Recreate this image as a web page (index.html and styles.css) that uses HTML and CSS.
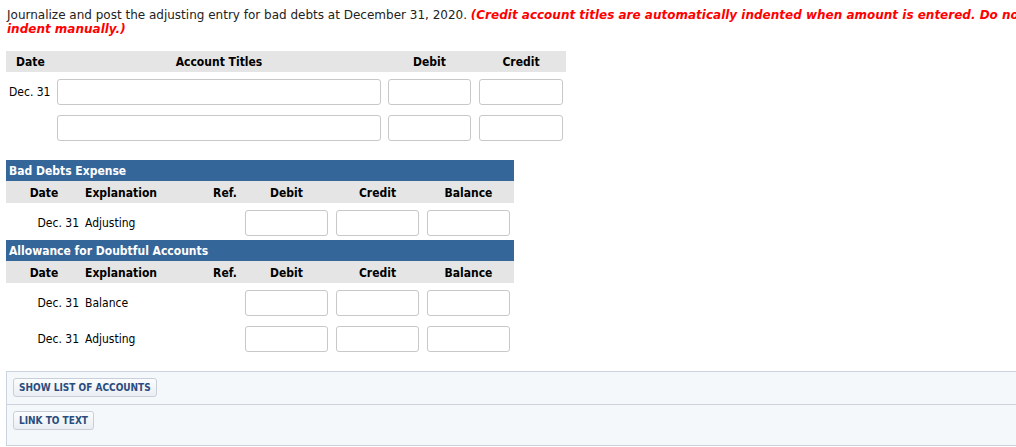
FILE: index.html
```html
<!DOCTYPE html>
<html>
<head>
<meta charset="utf-8">
<link rel="stylesheet" href="styles.css">
</head>
<body>
<div class="page">
  <p class="intro">Journalize and post the adjusting entry for bad debts at December 31, 2020. <em class="note">(Credit account titles are automatically indented when amount is entered. Do not<br>indent manually.)</em></p>

  <div class="journal">
    <div class="jrow jhead">
      <div class="jdate">Date</div>
      <div class="jacct">Account Titles</div>
      <div class="jdebit">Debit</div>
      <div class="jcredit">Credit</div>
    </div>
    <div class="jrow jentry">
      <div class="jdate-val">Dec. 31</div>
      <div class="jacct"><input class="fld fld-acct" type="text"></div>
      <div class="jdebit"><input class="fld fld-num" type="text"></div>
      <div class="jcredit"><input class="fld fld-num2" type="text"></div>
    </div>
    <div class="jrow jentry">
      <div class="jdate-val"></div>
      <div class="jacct"><input class="fld fld-acct" type="text"></div>
      <div class="jdebit"><input class="fld fld-num" type="text"></div>
      <div class="jcredit"><input class="fld fld-num2" type="text"></div>
    </div>
  </div>

  <div class="ledger first">
    <div class="ltitle">Bad Debts Expense</div>
    <div class="lrow lhead">
      <div class="ldate">Date</div>
      <div class="lexp">Explanation</div>
      <div class="lref">Ref.</div>
      <div class="lamt">Debit</div>
      <div class="lamt">Credit</div>
      <div class="lamt">Balance</div>
    </div>
    <div class="lrow lentry">
      <div class="ldate-val">Dec. 31</div>
      <div class="lexp">Adjusting</div>
      <div class="lref"></div>
      <div class="lamt"><input class="fld fld-l" type="text"></div>
      <div class="lamt"><input class="fld fld-l" type="text"></div>
      <div class="lamt"><input class="fld fld-l" type="text"></div>
    </div>
  </div>

  <div class="ledger second">
    <div class="ltitle">Allowance for Doubtful Accounts</div>
    <div class="lrow lhead">
      <div class="ldate">Date</div>
      <div class="lexp">Explanation</div>
      <div class="lref">Ref.</div>
      <div class="lamt">Debit</div>
      <div class="lamt">Credit</div>
      <div class="lamt">Balance</div>
    </div>
    <div class="lrow lentry">
      <div class="ldate-val">Dec. 31</div>
      <div class="lexp">Balance</div>
      <div class="lref"></div>
      <div class="lamt"><input class="fld fld-l" type="text"></div>
      <div class="lamt"><input class="fld fld-l" type="text"></div>
      <div class="lamt"><input class="fld fld-l" type="text"></div>
    </div>
    <div class="lrow lentry">
      <div class="ldate-val">Dec. 31</div>
      <div class="lexp">Adjusting</div>
      <div class="lref"></div>
      <div class="lamt"><input class="fld fld-l" type="text"></div>
      <div class="lamt"><input class="fld fld-l" type="text"></div>
      <div class="lamt"><input class="fld fld-l" type="text"></div>
    </div>
  </div>

  <div class="panel">
    <div class="panel-sec sec1"><button class="btn" type="button">SHOW LIST OF ACCOUNTS</button></div>
    <div class="panel-sec sec2"><button class="btn" type="button">LINK TO TEXT</button></div>
  </div>
</div>
</body>
</html>
```
FILE: styles.css
```css
html, body {
  margin: 0;
  padding: 0;
  background: #fff;
  overflow: hidden;
}
body {
  font-family: "DejaVu Sans Condensed", "DejaVu Sans", sans-serif;
  font-size: 12px;
  color: #000;
}
.page {
  width: 1040px;
  padding: 8px 0 0 6px;
}
.intro {
  margin: 0 0 0 1px;
  font-family: "DejaVu Sans", Verdana, sans-serif;
  font-size: 12px;
  line-height: 14px;
  color: #222;
  white-space: nowrap;
}
.note {
  color: #f00;
  font-weight: bold;
  font-style: italic;
}

/* Journal */
.journal {
  width: 560px;
  margin-top: 15px;
}
.jrow {
  display: grid;
  grid-template-columns: 51px 324px 90px 92px;
}
.jhead {
  background: #e5e5e5;
  box-sizing: border-box;
  height: 21px;
  padding-top: 1px;
  line-height: 21px;
  font-weight: bold;
}
.jhead .jdate { padding-left: 10px; }
.jhead .jacct,
.jhead .jdebit,
.jhead .jcredit { text-align: center; }
.jdebit { padding-left: 7px; width: 83px; }
.jcredit { padding-left: 8px; width: 84px; }
.jentry {
  padding: 7px 0 3px;
  align-items: center;
}
.jdate-val { padding-left: 3px; }

.fld {
  display: block;
  box-sizing: border-box;
  height: 26px;
  margin: 0;
  padding: 0 4px;
  border: 1px solid #c8c8c8;
  border-radius: 3px;
  background: #fff;
  font: inherit;
  outline: none;
}
.fld-acct { width: 324px; }
.fld-num { width: 83px; }
.fld-num2 { width: 84px; }
.fld-l { width: 83px; }

/* Ledgers */
.ledger {
  width: 508px;
}
.ledger.first { margin-top: 16px; }
.ledger.second { margin-top: 1px; }
.ltitle {
  background: #346699;
  color: #fff;
  font-weight: bold;
  box-sizing: border-box;
  height: 21px;
  padding: 1px 0 0 3px;
  line-height: 21px;
}
.lrow {
  display: grid;
  grid-template-columns: 77px 126px 32px 91px 91px 91px;
  align-items: center;
}
.lhead {
  background: #e5e5e5;
  box-sizing: border-box;
  height: 22px;
  padding-top: 2px;
  font-weight: bold;
}
.lhead .ldate,
.lhead .lref,
.lhead .lamt { text-align: center; }
.lhead .ldate { padding-right: 1px; }
.lexp { padding-left: 2px; }
.lamt { padding: 0 4px; }
.lentry {
  padding: 7px 0 3px;
}
.ldate-val {
  text-align: right;
  padding-right: 4px;
}

/* Bottom panel */
.panel {
  margin-top: 16px;
  width: 1030px;
  background: #f5f8fb;
  border-top: 1px solid #cdd3de;
  border-bottom: 1px solid #cdd3de;
  border-left: 1px solid #cdd3de;
}
.panel-sec {
  padding: 6px 0 0 6px;
}
.sec1 {
  height: 26px;
  border-bottom: 1px solid #cdd3de;
}
.sec2 {
  height: 34px;
}
.btn {
  display: block;
  height: 19px;
  margin: 0;
  padding: 0 5px;
  border: 1px solid #c9cfd8;
  border-radius: 3px;
  background: linear-gradient(#fbfcfd, #eaeef3);
  color: #2b4c7e;
  font-family: "DejaVu Sans Condensed", "DejaVu Sans", sans-serif;
  font-size: 10px;
  font-weight: bold;
  line-height: 17px;
  cursor: pointer;
}
```
